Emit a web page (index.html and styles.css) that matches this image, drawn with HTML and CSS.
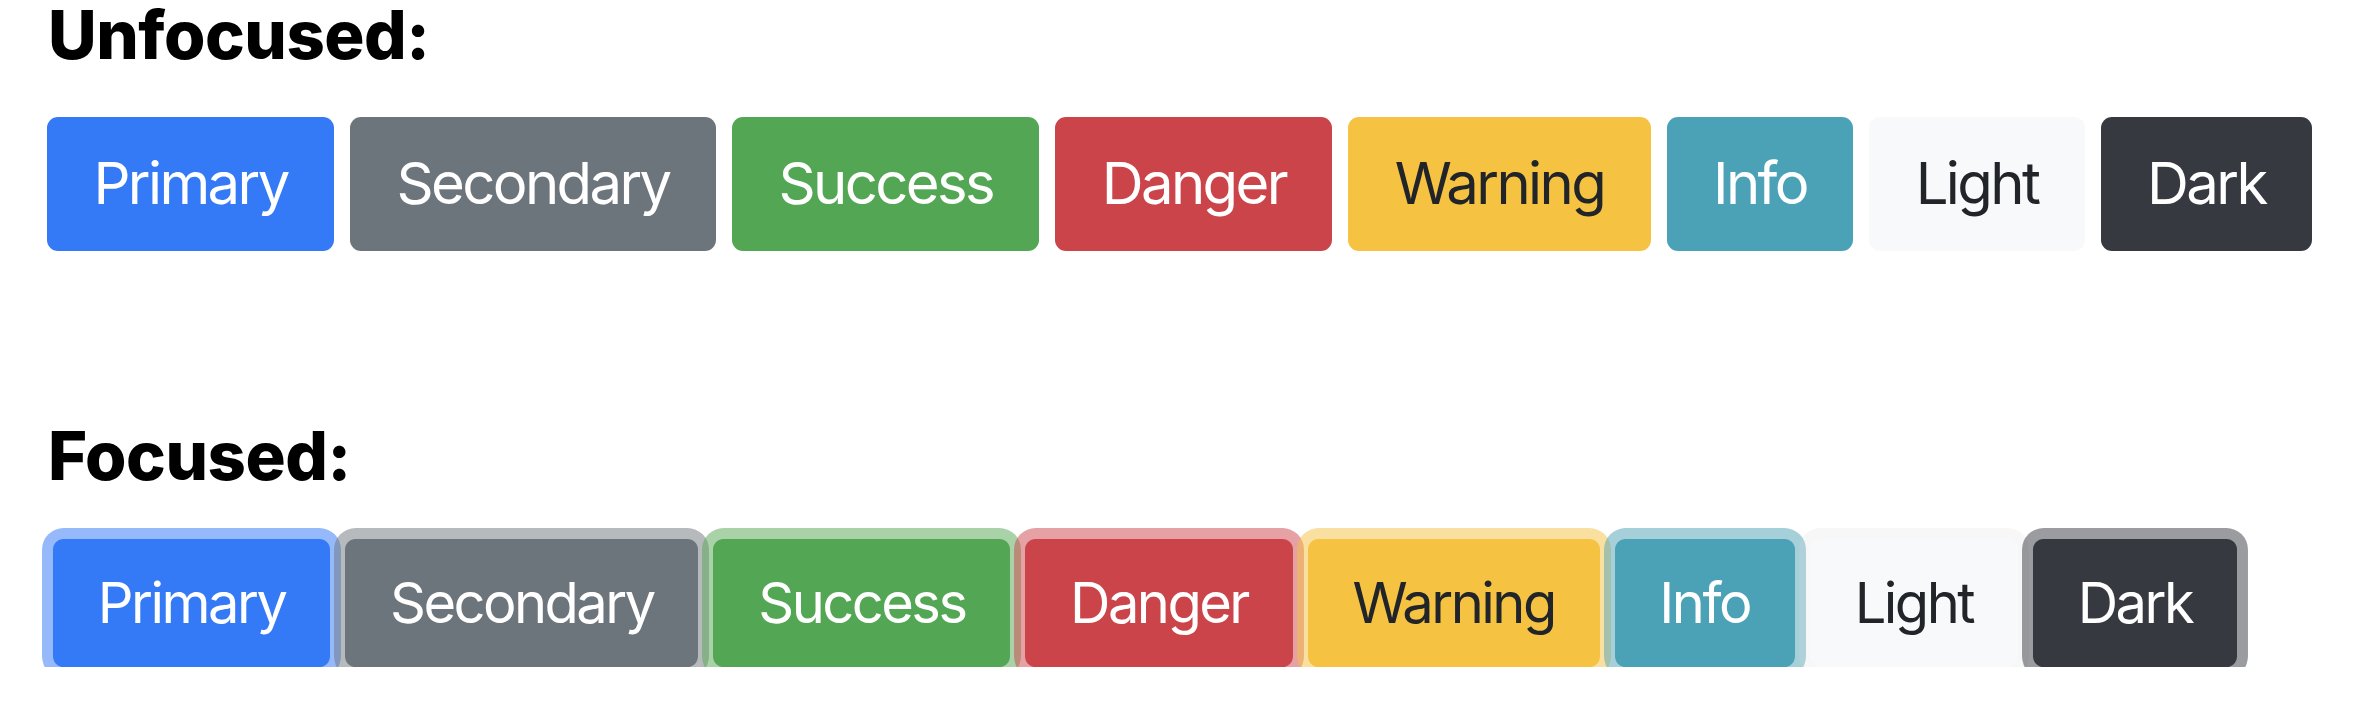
FILE: index.html
```html
<!DOCTYPE html>
<html lang="en">
<head>
<meta charset="utf-8">
<title>Buttons</title>
<link rel="stylesheet" href="styles.css">
</head>
<body>
<main class="page">
  <section class="group">
    <h2 class="title">Unfocused:</h2>
    <div class="btn-row">
      <button class="btn btn-primary">Primary</button>
      <button class="btn btn-secondary">Secondary</button>
      <button class="btn btn-success">Success</button>
      <button class="btn btn-danger">Danger</button>
      <button class="btn btn-warning">Warning</button>
      <button class="btn btn-info">Info</button>
      <button class="btn btn-light">Light</button>
      <button class="btn btn-dark">Dark</button>
    </div>
  </section>
  <section class="group group-focused">
    <h2 class="title">Focused:</h2>
    <div class="btn-row btn-row-focused">
      <button class="btn btn-primary focus">Primary</button>
      <button class="btn btn-secondary focus">Secondary</button>
      <button class="btn btn-success focus">Success</button>
      <button class="btn btn-danger focus">Danger</button>
      <button class="btn btn-warning focus">Warning</button>
      <button class="btn btn-info focus">Info</button>
      <button class="btn btn-light focus">Light</button>
      <button class="btn btn-dark focus">Dark</button>
    </div>
  </section>
</main>
</body>
</html>
```

FILE: styles.css
```css
html, body {
  margin: 0;
  padding: 0;
  background: #ffffff;
}

body {
  font-family: Inter, "Liberation Sans", sans-serif;
  color: #000;
}

.page {
  padding: 1px 0 0 48px;
}

.title {
  margin: 0;
  font-size: 67px;
  line-height: 67px;
  font-weight: 800;
  letter-spacing: -0.5px;
  color: #000;
}

.btn-row {
  --pad-y: 0.405em;
  display: flex;
  align-items: flex-start;
  gap: 16px;
  margin-top: 49px;
  margin-left: -1px;
  font-size: 58px;
}

.group-focused {
  margin-top: 171px;
}

.btn-row-focused {
  --pad-y: 0.393em;
  margin-top: 50px;
  margin-left: 5px;
  gap: 15px;
  font-size: 56px;
}

.btn {
  font-family: inherit;
  font-size: 1em;
  font-weight: 400;
  line-height: 1.5;
  letter-spacing: -0.045em;
  padding: var(--pad-y) 0.8em;
  border: 0;
  border-radius: 0.19em;
  color: #fff;
  white-space: nowrap;
  cursor: pointer;
}

.btn-primary { background: #3479f6; }
.btn-secondary { background: #6d757c; }
.btn-success { background: #53a653; }
.btn-danger { background: #cb444a; }
.btn-warning { background: #f5c242; color: #212529; }
.btn-info { background: #4ba1b6; }
.btn-light { background: #f8f9fa; color: #212529; }
.btn-dark { background: #363a40; }

.btn-primary.focus { box-shadow: 0 0 0 0.196em rgba(52, 121, 246, 0.52); }
.btn-secondary.focus { box-shadow: 0 0 0 0.196em rgba(110, 117, 124, 0.5); }
.btn-success.focus { box-shadow: 0 0 0 0.196em rgba(83, 166, 83, 0.5); }
.btn-danger.focus { box-shadow: 0 0 0 0.196em rgba(203, 68, 74, 0.5); }
.btn-warning.focus { box-shadow: 0 0 0 0.196em rgba(245, 194, 66, 0.5); }
.btn-info.focus { box-shadow: 0 0 0 0.196em rgba(75, 161, 182, 0.5); }
.btn-light.focus { box-shadow: 0 0 0 0.196em rgba(216, 217, 219, 0.2); }
.btn-dark.focus { box-shadow: 0 0 0 0.196em rgba(54, 58, 64, 0.5); }
```
